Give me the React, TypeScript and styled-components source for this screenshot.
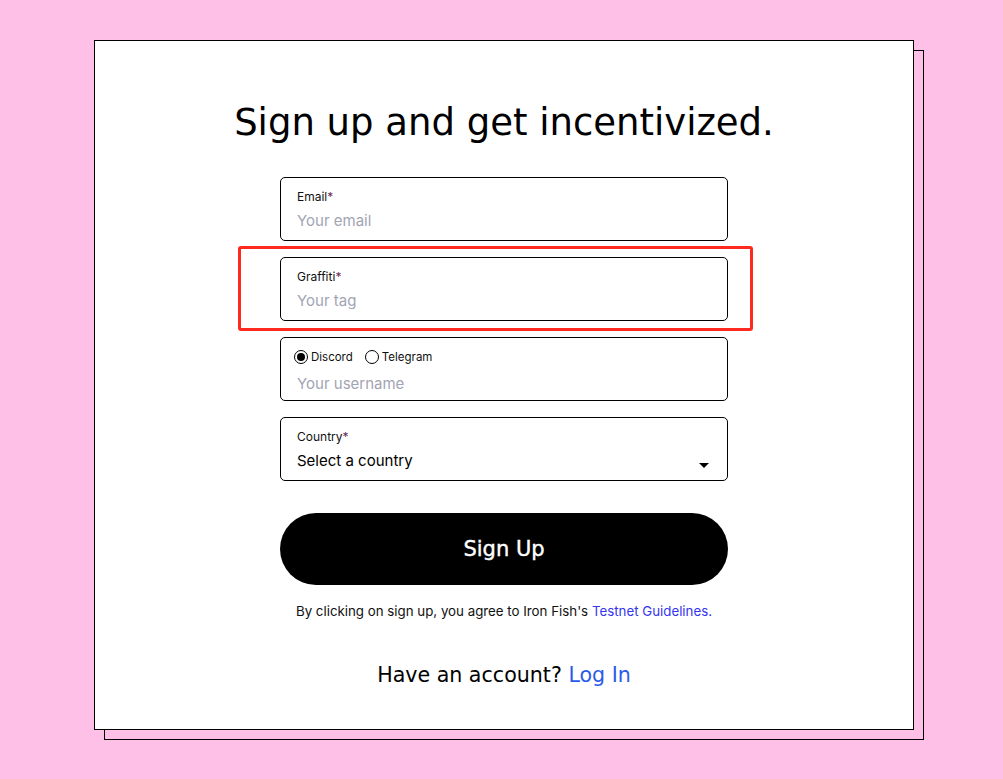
import React, { useState } from 'react';
import styled, { createGlobalStyle } from 'styled-components';

const GlobalStyle = createGlobalStyle`
  html, body {
    margin: 0;
    padding: 0;
    background: #ffc0e8;
  }
  body {
    font-family: Inter, Roboto, "Liberation Sans", sans-serif;
    color: #000;
  }
`;

export const Page = styled.main`
  min-height: 779px;
  padding: 40px 0 0 94px;
  box-sizing: border-box;
`;

export const Card = styled.section`
  position: relative;
  width: 820px;
  height: 690px;
  box-sizing: border-box;
  background: #fff;
  border: 1px solid #000;
  box-shadow: 10px 10px 0 -1px #ffc0e8, 10px 10px 0 0 #000;
  display: flex;
  flex-direction: column;
  align-items: center;
  padding-top: 62px;
`;

export const Title = styled.h1`
  margin: 0 0 34px;
  font-family: "DejaVu Sans", sans-serif;
  font-weight: 400;
  font-size: 37px;
  line-height: 40px;
`;

export const Form = styled.form`
  width: 448px;
  display: flex;
  flex-direction: column;
  gap: 16px;
`;

export const Field = styled.label`
  position: relative;
  display: flex;
  flex-direction: column;
  height: 64px;
  box-sizing: border-box;
  border: 1px solid #000;
  border-radius: 5px;
  padding: 11px 16px 0;
  cursor: text;
`;

export const Label = styled.span`
  font-size: 12px;
  line-height: 16px;
  color: #111;
`;

export const Star = styled.span`
  color: #6b1f5c;
`;

export const Input = styled.input`
  border: none;
  outline: none;
  padding: 0;
  margin-top: 6px;
  font-family: Inter, Roboto, sans-serif;
  font-size: 15px;
  line-height: 20px;
  color: #000;
  background: transparent;
  &::placeholder {
    color: #a2a4b3;
  }
`;

export const RadioRow = styled.div`
  display: flex;
  gap: 12px;
  align-items: center;
  height: 16px;
  margin: 0 0 3px -3px;
`;

export const RadioOption = styled.span`
  display: flex;
  align-items: center;
  gap: 3px;
  font-size: 11.5px;
  color: #111;
  cursor: pointer;
`;

export const RadioDot = styled.span<{ $on: boolean }>`
  width: 14px;
  height: 14px;
  box-sizing: border-box;
  border: 1px solid #000;
  border-radius: 50%;
  display: flex;
  align-items: center;
  justify-content: center;
  &::after {
    content: '';
    width: 8px;
    height: 8px;
    border-radius: 50%;
    background: ${(p) => (p.$on ? '#000' : 'transparent')};
  }
`;

export const Select = styled.div`
  margin-top: 6px;
  display: flex;
  justify-content: space-between;
  align-items: center;
  font-size: 15px;
  line-height: 20px;
  padding-right: 2px;
`;

export const Caret = styled.span`
  width: 0;
  height: 0;
  margin-top: 8px;
  border-left: 5px solid transparent;
  border-right: 5px solid transparent;
  border-top: 5px solid #000;
`;

export const SubmitButton = styled.button`
  margin-top: 16px;
  height: 72px;
  width: 448px;
  border: none;
  border-radius: 36px;
  background: #000;
  color: #fff;
  font-family: "DejaVu Sans", sans-serif;
  font-size: 21px;
  -webkit-text-stroke: 0.4px #fff;
  cursor: pointer;
`;

export const Terms = styled.p`
  margin: 17px 0 0;
  font-size: 13.3px;
  line-height: 18px;
  color: #111;
`;

export const Link = styled.a<{ $tone?: string }>`
  color: ${(p) => p.$tone || '#3535ef'};
  text-decoration: none;
`;

export const Footer = styled.p`
  margin: 43px 0 0;
  font-family: "DejaVu Sans", sans-serif;
  font-size: 20.6px;
  line-height: 24px;
`;

export const Highlight = styled.div`
  position: absolute;
  left: 143px;
  top: 205px;
  width: 515px;
  height: 85px;
  box-sizing: border-box;
  border: 3px solid #ff2a1f;
  border-radius: 3px;
  pointer-events: none;
`;

const App = () => {
  const [channel, setChannel] = useState('discord');
  return (
    <>
      <GlobalStyle />
      <Page>
        <Card>
          <Title>Sign up and get incentivized.</Title>
          <Form onSubmit={(e) => e.preventDefault()}>
            <Field>
              <Label>
                Email<Star>*</Star>
              </Label>
              <Input placeholder="Your email" />
            </Field>
            <Field>
              <Label>
                Graffiti<Star>*</Star>
              </Label>
              <Input placeholder="Your tag" />
            </Field>
            <Field>
              <RadioRow>
                <RadioOption onClick={() => setChannel('discord')}>
                  <RadioDot $on={channel === 'discord'} />
                  Discord
                </RadioOption>
                <RadioOption onClick={() => setChannel('telegram')}>
                  <RadioDot $on={channel === 'telegram'} />
                  Telegram
                </RadioOption>
              </RadioRow>
              <Input placeholder="Your username" />
            </Field>
            <Field>
              <Label>
                Country<Star>*</Star>
              </Label>
              <Select>
                Select a country
                <Caret />
              </Select>
            </Field>
            <SubmitButton type="submit">Sign Up</SubmitButton>
          </Form>
          <Terms>
            By clicking on sign up, you agree to Iron Fish&apos;s{' '}
            <Link href="#">Testnet Guidelines.</Link>
          </Terms>
          <Footer>
            Have an account? <Link href="#" $tone="#2a5be8">Log In</Link>
          </Footer>
          <Highlight />
        </Card>
      </Page>
    </>
  );
};

export default App;
